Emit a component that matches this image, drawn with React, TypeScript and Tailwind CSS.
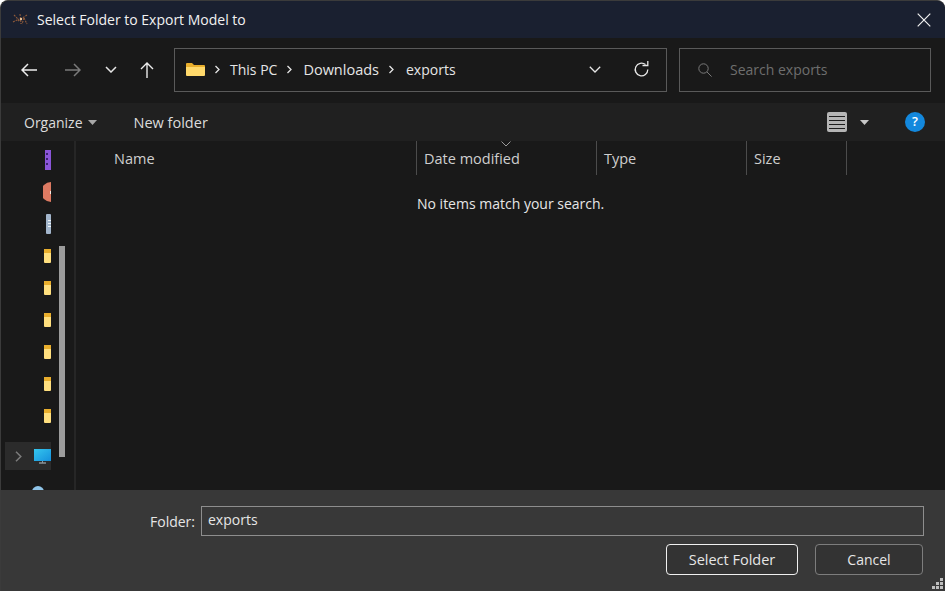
import React from "react";

const font = { fontFamily: '"Open Sans", "Noto Sans", sans-serif' };

const FolderStub = () => (
  <svg width="7" height="14" viewBox="0 0 7 14">
    <rect width="7" height="14" rx="1" fill="#ffdf7e" />
    <path d="M0 1a1 1 0 0 1 1-1h6v4H0z" fill="#e9ae2c" />
  </svg>
);

const NavRow = ({ children }: { children: React.ReactNode }) => (
  <div className="flex h-8 items-center justify-end">{children}</div>
);

const Chevron = () => (
  <svg width="7" height="9" viewBox="0 0 7 9" className="mx-[9px] shrink-0">
    <path d="M1.5 1 5 4.5 1.5 8" fill="none" stroke="#e6e6e6" strokeWidth="1.3" />
  </svg>
);

const Column = ({ label, width, sorted }: { label: string; width: string; sorted?: boolean }) => (
  <div className={`relative flex h-[34px] items-center border-r border-[#4c4c4c] pl-[7px] pt-[1px] text-[14.5px] text-[#cfcfcf] ${width}`}>
    {sorted && (
      <svg width="10" height="6" viewBox="0 0 10 6" className="absolute left-[84px] top-0">
        <path d="M.5.5 5 5 9.5.5" fill="none" stroke="#9a9a9a" />
      </svg>
    )}
    {label}
  </div>
);

export default function App() {
  return (
    <div style={font} className="relative flex h-[591px] w-[945px] flex-col overflow-hidden rounded-t-[8px] border-l border-t border-[#3b3b3b] bg-[#191919] text-white">
      {/* title bar */}
      <div className="flex h-[37px] shrink-0 items-center bg-[#1a2030] pl-[11px] pr-[14px]">
        <svg width="18" height="14" viewBox="0 0 18 14" className="shrink-0">
          <g stroke="#8f5a3a" strokeWidth="1.1" strokeDasharray="2 1">
            <path d="M2 2 7 7M8 1l1 10M15 2 6 8M1 9l6-3M12 5l3 6M12 5 10 11" />
          </g>
          <circle cx="9" cy="6" r="1.2" fill="#e8c7a0" />
        </svg>
        <span className="ml-[7px] text-[14px] leading-none text-[#f2f2f2]">Select Folder to Export Model to</span>
        <svg width="14" height="14" viewBox="0 0 14 14" className="ml-auto">
          <path d="M.7.7l12.600 12.600M13.300.7.7 13.300" stroke="#f0f0f0" strokeWidth="1.2" />
        </svg>
      </div>

      {/* address row */}
      <div className="flex h-[65px] shrink-0 items-center bg-[#191919] pb-[2px] pl-[20px]">
        <svg width="16" height="14" viewBox="0 0 16 14" className="shrink-0">
          <path d="M7 1 1 7l6 6M1 7h15" fill="none" stroke="#ededed" strokeWidth="1.5" />
        </svg>
        <svg width="16" height="14" viewBox="0 0 16 14" className="ml-[28px] shrink-0">
          <path d="M9 1l6 6-6 6M15 7H0" fill="none" stroke="#7a7a7a" strokeWidth="1.5" />
        </svg>
        <svg width="12" height="7" viewBox="0 0 12 7" className="ml-[24px] shrink-0">
          <path d="M1 1l5 5 5-5" fill="none" stroke="#e6e6e6" strokeWidth="1.5" />
        </svg>
        <svg width="14" height="16" viewBox="0 0 14 16" className="ml-[23px] shrink-0">
          <path d="M1 7l6-6 6 6M7 1v15" fill="none" stroke="#ededed" strokeWidth="1.4" />
        </svg>
        <div className="ml-[20px] flex h-[44px] w-[493px] shrink-0 items-center border border-[#5a5a5a] pl-[11px] pr-[16px] text-[14px] text-[#e6e6e6]">
          <svg width="19" height="15" viewBox="0 0 19 15" className="shrink-0">
            <path d="M0 2a1 1 0 0 1 1-1h5l2 2h10a1 1 0 0 1 1 1v2H0z" fill="#e9ae2c" />
            <path d="M0 5h19v8a1 1 0 0 1-1 1H1a1 1 0 0 1-1-1z" fill="#ffd96b" />
          </svg>
          <Chevron />
          <span>This PC</span>
          <Chevron />
          <span className="ml-[1px] text-[14.5px]">Downloads</span>
          <Chevron />
          <span className="ml-[2px]">exports</span>
          <svg width="12" height="7" viewBox="0 0 12 7" className="ml-auto shrink-0">
            <path d="M.8.8l5.200 5.200L11.200.8" fill="none" stroke="#e6e6e6" strokeWidth="1.3" />
          </svg>
          <svg width="17" height="17" viewBox="0 0 17 17" className="ml-[32px] shrink-0">
            <path d="M14.800 8.500A6.300 6.300 0 1 1 12.500 3.600" fill="none" stroke="#e6e6e6" strokeWidth="1.3" />
            <path d="M9.500 4.500h5.300V0" fill="none" stroke="#e6e6e6" strokeWidth="1.3" />
          </svg>
        </div>
        <div className="ml-[12px] flex h-[44px] w-[252px] shrink-0 items-center border border-[#5a5a5a] pl-[18px] text-[14px] text-[#6e6e6e]">
          <svg width="14" height="14" viewBox="0 0 14 14" className="shrink-0">
            <circle cx="5.500" cy="5.500" r="4.700" fill="none" stroke="#7a7a7a" />
            <path d="M9 9l4.600 4.600" stroke="#7a7a7a" />
          </svg>
          <span className="ml-[18px]">Search exports</span>
        </div>
      </div>

      {/* toolbar */}
      <div className="flex h-[38px] shrink-0 items-center bg-[#202020] pl-[23px] text-[14px] text-[#dcdcdc]">
        <span>Organize</span>
        <svg width="9" height="5" viewBox="0 0 9 5" className="ml-[5px]">
          <path d="M0 0h9L4.500 5z" fill="#a8a8a8" />
        </svg>
        <span className="ml-[37px] pt-[1px] text-[14.5px]">New folder</span>
        <div className="ml-auto flex h-[20px] w-[20px] flex-col justify-center gap-[3px] rounded-[2px] bg-[#b5b5b5] px-[2px]">
          <div className="h-[1px] bg-[#1e1e1e]" />
          <div className="h-[1px] bg-[#1e1e1e]" />
          <div className="h-[1px] bg-[#1e1e1e]" />
          <div className="h-[1px] bg-[#1e1e1e]" />
        </div>
        <svg width="9" height="5" viewBox="0 0 9 5" className="ml-[13px]">
          <path d="M0 0h9L4.500 5z" fill="#c8c8c8" />
        </svg>
        <div className="ml-[36px] mr-[20px] flex h-[20px] w-[20px] items-center justify-center rounded-full bg-[#1388dd] text-[13px] font-semibold text-white">?</div>
      </div>

      {/* body */}
      <div className="flex min-h-0 flex-1">
        <div className="flex w-[75px] shrink-0 border-r-2 border-[#262626]">
          <div className="ml-[4px] h-full w-[46px] shrink-0 overflow-hidden pt-[3px]">
            <NavRow>
              <svg width="6" height="20" viewBox="0 0 6 20">
                <rect width="6" height="20" fill="#8a55d8" />
                <path d="M1 3h2v2H1zM1 8h2v2H1zM1 13h2v2H1z" fill="#3a2070" />
              </svg>
            </NavRow>
            <NavRow>
              <svg width="8" height="20" viewBox="0 0 8 20">
                <path d="M8 0a10 10 0 0 0 0 20z" fill="#dd7a62" />
                <rect x="7" y="9" width="1" height="3" fill="#f4e8e0" />
              </svg>
            </NavRow>
            <NavRow>
              <svg width="5" height="20" viewBox="0 0 5 20">
                <rect width="5" height="20" rx="1" fill="#a3b6cc" />
                <path d="M2 6h3v1H2zM2 9h3v1H2zM2 12h3v1H2z" fill="#eef3f8" />
              </svg>
            </NavRow>
            <NavRow><FolderStub /></NavRow>
            <NavRow><FolderStub /></NavRow>
            <NavRow><FolderStub /></NavRow>
            <NavRow><FolderStub /></NavRow>
            <NavRow><FolderStub /></NavRow>
            <NavRow><FolderStub /></NavRow>
            <div className="mt-[10px] flex h-[28px] items-center bg-[#2b2b2b] pl-[10px]">
              <svg width="7" height="11" viewBox="0 0 7 11">
                <path d="M1 .8 5.800 5.500 1 10.200" fill="none" stroke="#7c7c7c" strokeWidth="1.5" />
              </svg>
              <svg width="17" height="15" viewBox="0 0 17 15" className="ml-[12px] shrink-0">
                <defs>
                  <linearGradient id="screen" x1="0" y1="0" x2="1" y2="1">
                    <stop offset="0" stopColor="#35c6ee" />
                    <stop offset="1" stopColor="#1590dc" />
                  </linearGradient>
                </defs>
                <rect width="17" height="12" fill="url(#screen)" />
                <rect x="5" y="13.500" width="7" height="1" fill="#b8c4cc" />
                <rect x="8" y="12" width="1" height="2" fill="#8a98a2" />
              </svg>
            </div>
            <div className="mt-[16px] flex justify-center pl-[20px]">
              <svg width="12" height="6" viewBox="0 0 12 6">
                <path d="M0 6a6 6 0 0 1 12 0z" fill="#8fc4e8" />
              </svg>
            </div>
          </div>
          <div className="ml-[8px] mt-[105px] h-[211px] w-[6px] shrink-0 bg-[#9c9c9c]" />
        </div>

        <div className="min-w-0 flex-1 bg-[#191919]">
          <div className="flex h-[34px]">
            <div className="flex h-[34px] w-[341px] items-center border-r border-[#4c4c4c] pl-[38px] pt-[1px] text-[14.5px] text-[#cfcfcf]">Name</div>
            <Column label="Date modified" width="w-[180px]" sorted />
            <Column label="Type" width="w-[150px]" />
            <Column label="Size" width="w-[100px]" />
          </div>
          <div className="pl-[341px] pt-[18px] text-[14px] text-[#e6e6e6]">No items match your search.</div>
        </div>
      </div>

      {/* footer */}
      <div className="relative h-[101px] shrink-0 bg-[#383838] pt-[16px] text-[14px] text-[#e6e6e6]">
        <div className="flex items-center">
          <span className="ml-[149px] w-[51px]">Folder:</span>
          <div className="flex h-[30px] w-[723px] items-start border border-[#8e8e8e] pl-[6px] pt-[3px] leading-[19px]">exports</div>
        </div>
        <div className="mt-[8px] flex justify-end pr-[22px]">
          <div className="flex h-[31px] w-[132px] items-center justify-center rounded-[4px] border border-[#f0f0f0] bg-[#333333] text-[14.5px]">Select Folder</div>
          <div className="ml-[17px] flex h-[31px] w-[108px] items-center justify-center rounded-[4px] border border-[#7d7d7d] bg-[#333333]">Cancel</div>
        </div>
        <svg width="12" height="12" viewBox="0 0 12 12" className="absolute bottom-[1px] right-[1px]">
          <path d="M8 0h3v3H8zM4 4h3v3H4zM8 4h3v3H8zM0 8h3v3H0zM4 8h3v3H4zM8 8h3v3H8z" fill="#bdbdbd" />
        </svg>
      </div>
    </div>
  );
}
